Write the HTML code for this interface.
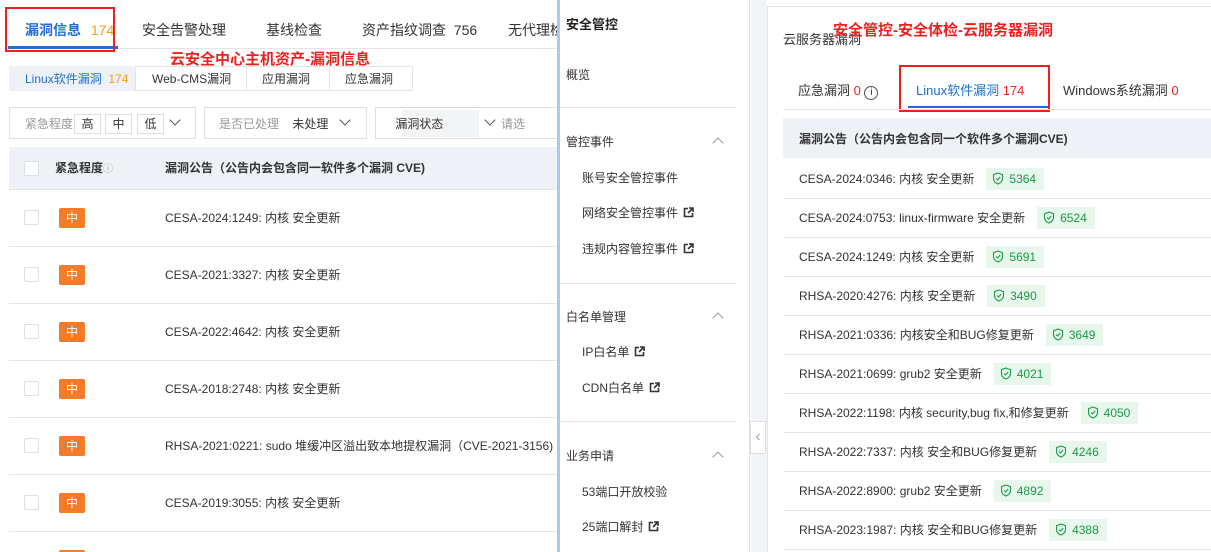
<!DOCTYPE html>
<html style="width:1211px;height:552px;overflow:hidden"><head><meta charset="utf-8"><style>
*{margin:0;padding:0;box-sizing:border-box}
body{width:1211px;height:552px;overflow:hidden;background:#fff;position:relative;font-family:"Liberation Sans","Noto Sans CJK SC",sans-serif;font-size:12px;color:#333}
.a{position:absolute;white-space:nowrap}
.line{position:absolute;height:1px;background:#e3e5e8}
.cb{position:absolute;width:15px;height:15px;border:1px solid #dcdfe6;border-radius:2px;background:#fff}
.tag{position:absolute;width:26px;height:20px;background:#f47b27;color:#fff;border-radius:2px;text-align:center;line-height:20px;font-size:12px}
.box{position:absolute;border:1px solid #dcdfe6;height:32px;background:#fff}
.chev{position:absolute;width:8px;height:8px;border-right:1.3px solid #555;border-bottom:1.3px solid #555;transform:rotate(45deg)}
.up{position:absolute;width:8px;height:8px;border-left:1.2px solid #999;border-top:1.2px solid #999;transform:rotate(45deg)}
.badge{position:absolute;height:22px;background:#e8f7ec;color:#1a9a45;padding:0 8px 0 6px;line-height:22px;font-size:12px}
.ext{margin-left:5px;vertical-align:-1px}
</style></head><body>
<div class="a" style="left:25px;top:20px;font-size:14px;color:#1f6fd0;font-weight:bold">漏洞信息 <span style="color:#f39c12;font-weight:normal;margin-left:6px">174</span></div>
<div class="a" style="left:8px;top:46px;width:110px;height:3px;background:#1f6fd0"></div>
<div class="a" style="left:5px;top:7px;width:110px;height:45px;border:2px solid #f01e1e"></div>
<div class="a" style="left:142px;top:20px;font-size:14px">安全告警处理</div>
<div class="a" style="left:266px;top:20px;font-size:14px">基线检查</div>
<div class="a" style="left:362px;top:20px;font-size:14px">资产指纹调查 &nbsp;756</div>
<div class="a" style="left:508px;top:20px;font-size:14px">无代理检</div>
<div class="line" style="left:118px;top:48px;width:442px"></div>
<div class="a" style="left:170px;top:48px;font-size:15px;color:#f01e1e;font-weight:bold">云安全中心主机资产-漏洞信息</div>
<div class="a" style="left:9px;top:66px;width:404px;height:25px;border:1px solid #e3e5e8"></div>
<div class="a" style="left:9px;top:66px;width:127px;height:25px;background:#eef1f5;border-right:1px solid #e3e5e8"></div>
<div class="a" style="left:25px;top:70px;color:#1f6fd0">Linux软件漏洞 &nbsp;<span style="color:#f39c12">174</span></div>
<div class="a" style="left:136px;top:66px;width:111px;height:25px;border-right:1px solid #e3e5e8"></div>
<div class="a" style="left:152px;top:70px">Web-CMS漏洞</div>
<div class="a" style="left:247px;top:66px;width:83px;height:25px;border-right:1px solid #e3e5e8"></div>
<div class="a" style="left:262px;top:70px">应用漏洞</div>
<div class="a" style="left:345px;top:70px">应急漏洞</div>
<div class="box" style="left:9px;top:107px;width:187px"></div>
<div class="a" style="left:25px;top:115px;color:#999">紧急程度</div>
<div class="box" style="left:74px;top:114px;width:27px;height:20px;text-align:center;line-height:18px">高</div>
<div class="box" style="left:105px;top:114px;width:27px;height:20px;text-align:center;line-height:18px">中</div>
<div class="box" style="left:137px;top:114px;width:27px;height:20px;text-align:center;line-height:18px">低</div>
<div class="chev" style="left:171px;top:116px"></div>
<div class="box" style="left:204px;top:107px;width:163px"></div>
<div class="a" style="left:219px;top:115px;color:#999">是否已处理 &nbsp;&nbsp;&nbsp;<span style="color:#333">未处理</span></div>
<div class="chev" style="left:341px;top:116px"></div>
<div class="box" style="left:375px;top:107px;width:190px"></div>
<div class="a" style="left:402px;top:110px;width:77px;height:27px;background:#f3f4f6"></div>
<div class="a" style="left:392px;top:115px">&nbsp;漏洞状态</div>
<div class="chev" style="left:486px;top:116px"></div>
<div class="a" style="left:501px;top:115px;color:#999">请选</div>
<div class="a" style="left:9px;top:147px;width:551px;height:43px;background:#eef1f5;border-bottom:1px solid #e3e5e8"></div>
<div class="cb" style="left:24px;top:161px"></div>
<div class="a" style="left:55px;top:159px;font-weight:bold">紧急程度<span style="color:#aaa;font-weight:normal;font-size:10px">ⓘ</span></div>
<div class="a" style="left:165px;top:159px;font-weight:bold">漏洞公告（公告内会包含同一软件多个漏洞 CVE)</div>
<div id="lrows"></div>
<div class="a" style="left:557px;top:0;width:3px;height:552px;background:#a9c8f3"></div>
<div class="a" style="left:560px;top:0;width:190px;height:552px;background:#fff;border-right:1px solid #dcdfe6"></div>
<div class="a" style="left:566px;top:14px;font-size:13px;font-weight:bold;color:#222">安全管控</div>
<div class="a" style="left:566px;top:66px">概览</div>
<div class="line" style="left:560px;top:107px;width:177px"></div>
<div class="a" style="left:566px;top:133px">管控事件</div><div class="up" style="left:714px;top:139px"></div>
<div class="a" style="left:582px;top:169px">账号安全管控事件</div>
<div class="a" style="left:582px;top:204px">网络安全管控事件<svg class="ext" width="11" height="11" viewBox="0 0 11 11"><path d="M5 1.5H1.5V9.5H9.5V6" fill="none" stroke="#333" stroke-width="1.6"/><path d="M6 1H10V5M10 1L5 6" fill="none" stroke="#333" stroke-width="1.6"/></svg></div>
<div class="a" style="left:582px;top:240px">违规内容管控事件<svg class="ext" width="11" height="11" viewBox="0 0 11 11"><path d="M5 1.5H1.5V9.5H9.5V6" fill="none" stroke="#333" stroke-width="1.6"/><path d="M6 1H10V5M10 1L5 6" fill="none" stroke="#333" stroke-width="1.6"/></svg></div>
<div class="line" style="left:560px;top:283px;width:177px"></div>
<div class="a" style="left:566px;top:308px">白名单管理</div><div class="up" style="left:714px;top:314px"></div>
<div class="a" style="left:582px;top:343px">IP白名单<svg class="ext" width="11" height="11" viewBox="0 0 11 11"><path d="M5 1.5H1.5V9.5H9.5V6" fill="none" stroke="#333" stroke-width="1.6"/><path d="M6 1H10V5M10 1L5 6" fill="none" stroke="#333" stroke-width="1.6"/></svg></div>
<div class="a" style="left:582px;top:379px">CDN白名单<svg class="ext" width="11" height="11" viewBox="0 0 11 11"><path d="M5 1.5H1.5V9.5H9.5V6" fill="none" stroke="#333" stroke-width="1.6"/><path d="M6 1H10V5M10 1L5 6" fill="none" stroke="#333" stroke-width="1.6"/></svg></div>
<div class="line" style="left:560px;top:421px;width:177px"></div>
<div class="a" style="left:566px;top:447px">业务申请</div><div class="up" style="left:714px;top:453px"></div>
<div class="a" style="left:582px;top:483px">53端口开放校验</div>
<div class="a" style="left:582px;top:518px">25端口解封<svg class="ext" width="11" height="11" viewBox="0 0 11 11"><path d="M5 1.5H1.5V9.5H9.5V6" fill="none" stroke="#333" stroke-width="1.6"/><path d="M6 1H10V5M10 1L5 6" fill="none" stroke="#333" stroke-width="1.6"/></svg></div>
<div class="a" style="left:751px;top:0;width:16px;height:552px;background:#f3f4f6"></div>
<div class="a" style="left:750px;top:421px;width:16px;height:33px;background:#fff;border:1px solid #dcdfe6;color:#aaa;text-align:center;line-height:30px;font-size:16px">&lsaquo;</div>
<div class="a" style="left:767px;top:6px;width:444px;height:546px;background:#fff;border-left:1px solid #e5e6e8;border-top:1px solid #e5e6e8"></div>
<div class="a" style="left:783px;top:29px;font-size:13px">云服务器漏洞</div>
<div class="a" style="left:833px;top:19px;font-size:15px;color:#f01e1e;font-weight:bold">安全管控-安全体检-云服务器漏洞</div>
<div class="a" style="left:798px;top:80px;font-size:13px">应急漏洞 <span style="color:#e22">0</span> <span style="display:inline-block;width:14px;height:14px;border:1px solid #555;border-radius:50%;text-align:center;line-height:12px;font-size:10px">i</span></div>
<div class="a" style="left:916px;top:80px;font-size:13px;color:#1f6fd0">Linux软件漏洞 <span style="color:#e22">174</span></div>
<div class="a" style="left:908px;top:106px;width:140px;height:2px;background:#1f6fd0"></div>
<div class="a" style="left:899px;top:65px;width:151px;height:47px;border:2px solid #f01e1e"></div>
<div class="a" style="left:1063px;top:80px;font-size:13px">Windows系统漏洞 <span style="color:#e22">0</span></div>
<div class="line" style="left:783px;top:109px;width:428px"></div>
<div class="a" style="left:783px;top:118px;width:428px;height:40px;background:#eef1f5"></div>
<div class="a" style="left:799px;top:130px;font-weight:bold">漏洞公告（公告内会包含同一个软件多个漏洞CVE)</div>
<div id="rrows"></div>
<script>
var L=["CESA-2024:1249: 内核 安全更新","CESA-2021:3327: 内核 安全更新","CESA-2022:4642: 内核 安全更新","CESA-2018:2748: 内核 安全更新","RHSA-2021:0221: sudo 堆缓冲区溢出致本地提权漏洞（CVE-2021-3156)","CESA-2019:3055: 内核 安全更新",""];
var h="";for(var i=0;i<L.length;i++){var y=218+57*i;
h+='<div class="cb" style="left:24px;top:'+(y-8)+'px"></div><div class="tag" style="left:59px;top:'+(y-10)+'px">中</div><div class="a" style="left:165px;top:'+(y-9)+'px">'+L[i]+'</div>';
if(i<6)h+='<div class="line" style="left:9px;top:'+(y+28)+'px;width:551px"></div>';}
document.getElementById("lrows").innerHTML=h;
var R=[["CESA-2024:0346: 内核 安全更新","5364"],["CESA-2024:0753: linux-firmware 安全更新","6524"],["CESA-2024:1249: 内核 安全更新","5691"],["RHSA-2020:4276: 内核 安全更新","3490"],["RHSA-2021:0336: 内核安全和BUG修复更新","3649"],["RHSA-2021:0699: grub2 安全更新","4021"],["RHSA-2022:1198: 内核 security,bug fix,和修复更新","4050"],["RHSA-2022:7337: 内核 安全和BUG修复更新","4246"],["RHSA-2022:8900: grub2 安全更新","4892"],["RHSA-2023:1987: 内核 安全和BUG修复更新","4388"]];
var s='<svg width="12" height="13" viewBox="0 0 12 13" style="vertical-align:-2px;margin-right:5px"><path d="M6 1L10.5 2.8V6.5C10.5 9 8.5 11 6 12C3.5 11 1.5 9 1.5 6.5V2.8Z" fill="none" stroke="#1a9a45" stroke-width="1.1"/><path d="M4 6.5L5.5 8L8.2 5" fill="none" stroke="#1a9a45" stroke-width="1.1"/></svg>';
h="";var c=document.createElement("canvas").getContext("2d");c.font='12px "Liberation Sans","Noto Sans CJK SC",sans-serif';
for(i=0;i<R.length;i++){var y=179+39*i;var w=c.measureText(R[i][0]).width;
h+='<div class="a" style="left:799px;top:'+(y-9)+'px">'+R[i][0]+'</div><div class="badge" style="left:'+(799+w+12)+'px;top:'+(y-11)+'px">'+s+R[i][1]+'</div><div class="line" style="left:783px;top:'+(y+19)+'px;width:428px"></div>';}
document.getElementById("rrows").innerHTML=h;
</script>
</body></html>
